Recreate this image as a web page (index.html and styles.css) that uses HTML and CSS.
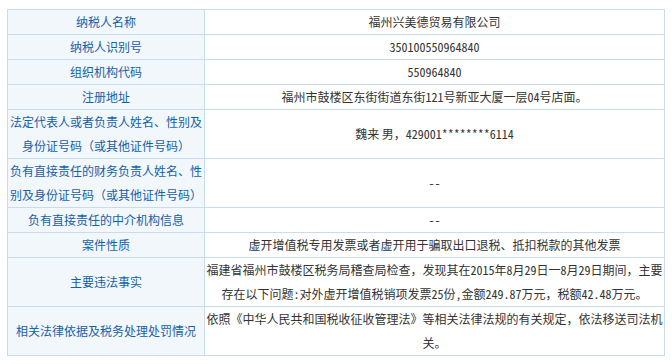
FILE: index.html
```html
<!DOCTYPE html>
<html lang="zh-CN">
<head>
<meta charset="utf-8">
<title>纳税人信息</title>
<link rel="stylesheet" href="styles.css">
</head>
<body>
<table class="info">
  <colgroup><col class="c-label"><col class="c-value"></colgroup>
  <tbody>
    <tr><th>纳税人名称</th><td>福州兴美德贸易有限公司</td></tr>
    <tr><th>纳税人识别号</th><td><span class="hw">350100550964840</span></td></tr>
    <tr><th>组织机构代码</th><td><span class="hw">550964840</span></td></tr>
    <tr><th>注册地址</th><td>福州市鼓楼区东街街道东街<span class="hw">121</span>号新亚大厦一层<span class="hw">04</span>号店面。</td></tr>
    <tr><th>法定代表人或者负责人姓名、性别及身份证号码（或其他证件号码）</th><td>魏来 男，<span class="hw">429001********6114</span></td></tr>
    <tr><th>负有直接责任的财务负责人姓名、性别及身份证号码（或其他证件号码）</th><td><span class="hw">--</span></td></tr>
    <tr><th>负有直接责任的中介机构信息</th><td><span class="hw">--</span></td></tr>
    <tr><th>案件性质</th><td>虚开增值税专用发票或者虚开用于骗取出口退税、抵扣税款的其他发票</td></tr>
    <tr><th>主要违法事实</th><td>福建省福州市鼓楼区税务局稽查局检查，发现其在<span class="hw">2015</span>年<span class="hw">8</span>月<span class="hw">29</span>日一<span class="hw">8</span>月<span class="hw">29</span>日期间，主要存在以下问题<span class="hw">:</span>对外虚开增值税销项发票<span class="hw">25</span>份<span class="hw">,</span>金额<span class="hw">249.87</span>万元，税额<span class="hw">42.48</span>万元。</td></tr>
    <tr><th>相关法律依据及税务处理处罚情况</th><td>依照《中华人民共和国税收征收管理法》等相关法律法规的有关规定，依法移送司法机关。</td></tr>
  </tbody>
</table>
</body>
</html>
```
FILE: styles.css
```css
html, body {
  margin: 0;
  padding: 0;
  background: #ffffff;
}

body {
  padding: 9px 0 0 7px;
}

.info {
  border-collapse: collapse;
  width: 657px;
  table-layout: fixed;
  font-family: "Noto Sans CJK SC", "Noto Sans", sans-serif;
  font-size: 12px;
  line-height: 24px;
}

.c-label { width: 197px; }
.c-value { width: 460px; }

.info th,
.info td {
  border: 1px solid #c9dbee;
  text-align: center;
  vertical-align: middle;
}

.info th {
  padding: 0 2px;
  background: #f2f7fc;
  color: #1560aa;
  font-weight: normal;
}

.info td {
  padding: 0 1px;
  color: #333333;
}

.hw {
  font-feature-settings: "hwid" 1;
}
```
